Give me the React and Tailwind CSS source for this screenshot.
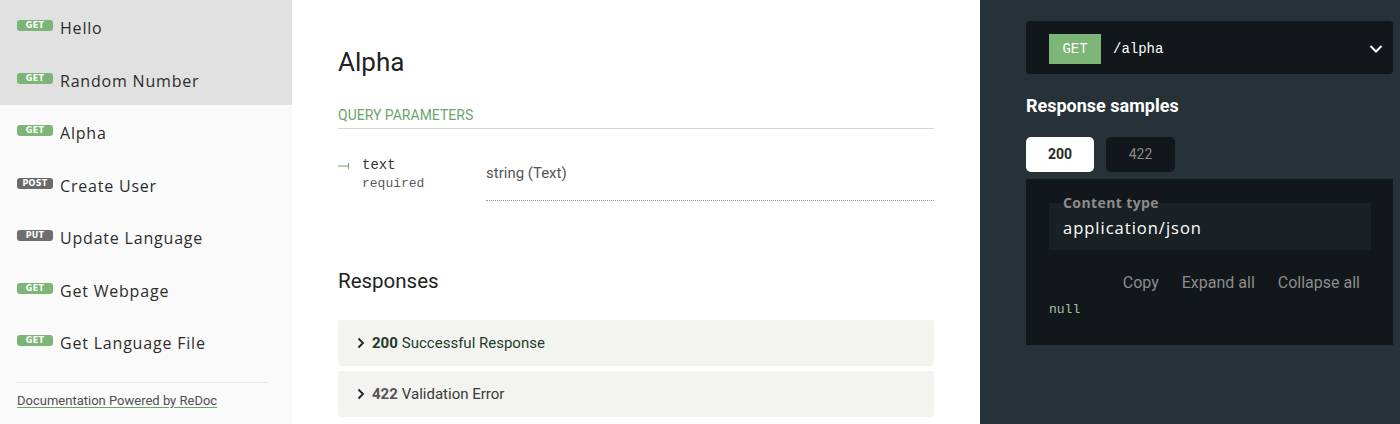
import React from 'react';

const navItems = [
  { method: 'GET', label: 'Hello', active: true },
  { method: 'GET', label: 'Random Number', active: true },
  { method: 'GET', label: 'Alpha' },
  { method: 'POST', label: 'Create User' },
  { method: 'PUT', label: 'Update Language' },
  { method: 'GET', label: 'Get Webpage' },
  { method: 'GET', label: 'Get Language File' },
];

const badgeColor = {
  GET: 'bg-[#7db577]',
  POST: 'bg-[#6a6a6a]',
  PUT: 'bg-[#6e6e6e]',
};

function Sidebar() {
  return (
    <aside className="w-[292px] shrink-0 bg-[#fafafa] h-[424px] font-['Open_Sans',sans-serif]">
      <div className="bg-[#e1e1e1]">
        {navItems.slice(0, 2).map((item) => (
          <NavItem key={item.label} item={item} />
        ))}
      </div>
      {navItems.slice(2).map((item) => (
        <NavItem key={item.label} item={item} />
      ))}
      <div className="ml-[16px] mr-[24px] mt-[14px] border-t border-[#e6e6e6]" />
      <div className="pl-[17px] pt-[4px]">
        <a className="text-[13px] leading-[16px] text-[#4f4f4f] underline decoration-[#6aa56a] underline-offset-2 font-['Roboto',sans-serif]">
          Documentation Powered by ReDoc
        </a>
      </div>
    </aside>
  );
}

function NavItem({ item }) {
  return (
    <div className="h-[52.5px] flex items-center pl-[17px] pt-[4px]">
      <span
        className={`${badgeColor[item.method]} w-[36px] h-[11px] rounded-[3px] text-white text-[8px] font-bold leading-[11px] text-center mr-[7px] mt-[-5px] tracking-[0.3px] font-['DejaVu_Sans',sans-serif]`}
      >
        {item.method}
      </span>
      <span className="text-[16px] leading-[20px] text-[#2c2c2c] tracking-[0.8px]">{item.label}</span>
    </div>
  );
}

function ParamMarker() {
  return (
    <svg width="12" height="10" viewBox="0 0 12 10" className="mt-[4px]">
      <path d="M0 5 H10" stroke="#6aa56a" strokeWidth="1" />
      <path d="M10.5 2 V8" stroke="#6aa56a" strokeWidth="1" />
    </svg>
  );
}

function Main() {
  return (
    <main className="w-[688px] shrink-0 bg-white pl-[46px] pr-[46px] font-['Roboto',sans-serif]">
      <h1 className="text-[26px] leading-[30px] text-[#222] mt-[47px]">Alpha</h1>
      <div className="mt-[30px] text-[14px] leading-[16px] text-[#6aa56a] pb-[5px] border-b border-[#d6d6d6]">
        QUERY PARAMETERS
      </div>
      <div className="flex mt-[28px]">
        <div className="w-[148px] flex">
          <div className="w-[24px]">
            <ParamMarker />
          </div>
          <div className="font-['Liberation_Mono',monospace]">
            <div className="text-[14px] leading-[16px] text-[#333]">text</div>
            <div className="text-[13px] leading-[15px] mt-[3px] text-[#5a5a5a]">required</div>
          </div>
        </div>
        <div className="flex-1">
          <div className="text-[15px] leading-[18px] text-[#555] mt-[7px]">string (Text)</div>
          <div className="mt-[18px] border-b border-dotted border-[#7ea87a]" />
        </div>
      </div>
      <h2 className="text-[20.5px] leading-[24px] text-[#222] mt-[68px]">Responses</h2>
      <div className="mt-[27px] flex flex-col gap-[5px]">
        <div className="h-[46px] bg-[#f3f3ef] rounded-[3px] flex items-center pl-[19px] text-[15px] text-[#1d3b29]">
          <Chevron />
          <span className="font-bold ml-[7px]">200</span>
          <span className="ml-[4px]">Successful Response</span>
        </div>
        <div className="h-[46px] bg-[#f3f3ef] rounded-[3px] flex items-center pl-[19px] text-[15px] text-[#3a3a3a]">
          <Chevron />
          <span className="font-bold ml-[7px] text-[#555]">422</span>
          <span className="ml-[4px]">Validation Error</span>
        </div>
      </div>
    </main>
  );
}

function Chevron() {
  return (
    <svg width="8" height="12" viewBox="0 0 8 12" className="mt-[-1px]">
      <path d="M1.5 1.5 L6 6 L1.5 10.5" fill="none" stroke="#222" strokeWidth="1.8" />
    </svg>
  );
}

function RightPanel() {
  return (
    <section className="flex-1 bg-[#263238] pl-[46px] pr-[7px] pt-[21px] font-['Roboto',sans-serif]">
      <div className="h-[53px] bg-[#11171a] rounded-[4px] flex items-center pl-[23px] pr-[10px] pt-[3px]">
        <span className="bg-[#7db577] w-[52px] h-[30px] flex items-center justify-center text-white text-[14px] font-['Liberation_Mono',monospace]">
          GET
        </span>
        <span className="ml-[12px] text-white text-[14px] font-['Liberation_Mono',monospace]">/alpha</span>
        <svg width="14" height="10" viewBox="0 0 14 10" className="ml-auto">
          <path d="M1.5 2 L7 7.5 L12.5 2" fill="none" stroke="white" strokeWidth="2" />
        </svg>
      </div>
      <h3 className="text-[18px] leading-[22px] font-bold text-white mt-[21px]">Response samples</h3>
      <div className="flex gap-[12px] mt-[20px]">
        <div className="w-[68px] h-[35px] bg-white rounded-[5px] flex items-center justify-center text-[14px] font-bold text-[#1e2a25]">
          200
        </div>
        <div className="w-[69px] h-[35px] bg-[#11171a] rounded-[5px] flex items-center justify-center text-[14px] text-[#8a8a8a]">
          422
        </div>
      </div>
      <div className="mt-[7px] h-[166px] bg-[#11171a] pl-[23px] pr-[22px] pt-[24px]">
        <div className="relative h-[47px] bg-[#1a2125] pl-[14px] pt-[13px]">
          <span className="absolute left-[14px] top-[-11px] text-[14px] font-bold tracking-[0.4px] text-[#8c8c8c] font-['Open_Sans',sans-serif]">
            Content type
          </span>
          <span className="text-[16.5px] tracking-[1px] text-white font-['Open_Sans',sans-serif]">application/json</span>
        </div>
        <div className="flex justify-end gap-[23px] pr-[11px] mt-[24px] text-[16px] leading-[18px] text-[#8c8c8c]">
          <span>Copy</span>
          <span>Expand all</span>
          <span>Collapse all</span>
        </div>
        <div className="mt-[8px] text-[13px] text-[#a8c0a4] font-['Liberation_Mono',monospace]">null</div>
      </div>
    </section>
  );
}

export default function App() {
  return (
    <div className="flex w-[1400px] h-[424px] overflow-hidden">
      <Sidebar />
      <Main />
      <RightPanel />
    </div>
  );
}
